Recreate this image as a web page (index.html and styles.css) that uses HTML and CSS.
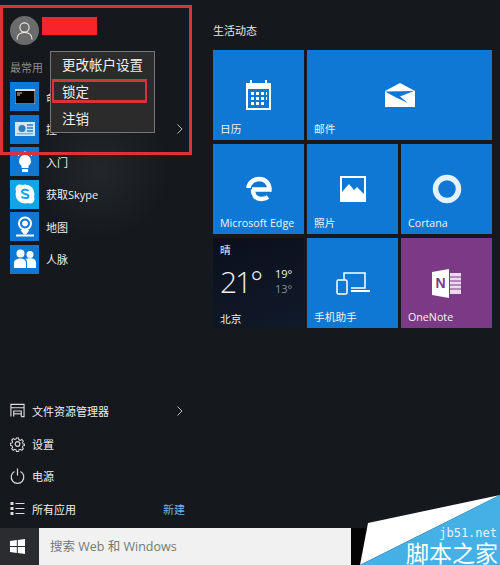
FILE: index.html
```html
<!DOCTYPE html>
<html lang="zh-CN">
<head>
  <meta charset="UTF-8">
  <title>开始菜单</title>
  <link rel="stylesheet" href="styles.css">
</head>
<body>
  <div class="start">
    <!-- Left column -->
    <div class="side">
      <div class="user">
        <div class="avatar">
          <svg width="17" height="18" viewBox="0 0 17 18" fill="none" stroke="#eee" stroke-width="1.100"><circle cx="8.500" cy="5.500" r="4.600"/><path d="M1 17.500c0-4.500 3-7 7.500-7s7.500 2.500 7.500 7"/></svg>
        </div>
        <div class="username"></div>
      </div>
      <div class="side-title">最常用</div>

      <div class="apps">
        <div class="app">
          <div class="app-icon blue">
            <svg width="20" height="15" viewBox="0 0 20 15"><rect width="20" height="15" fill="#d8d8d8"/><rect x="0.500" y="2" width="19" height="12.500" fill="#050505"/><path d="M2 4h5M2 6h3" stroke="#ccc"/></svg>
          </div>
          <span class="app-name">命</span>
        </div>
        <div class="app">
          <div class="app-icon blue">
            <svg width="20" height="15" viewBox="0 0 20 15"><rect width="20" height="14" fill="#cfe6f5"/><circle cx="7" cy="6.500" r="3.500" fill="#2a7fc0"/><path d="M12 3h6M12 6h6M12 9h6" stroke="#2a7fc0" stroke-width="1.500"/><rect x="2" y="11" width="16" height="1.500" fill="#7fb8df"/></svg>
          </div>
          <span class="app-name">控</span>
          <svg class="chevron" width="6" height="10" viewBox="0 0 6 10" fill="none" stroke="#bbb"><path d="M.5 .5L5 5 .5 9.500"/></svg>
        </div>
        <div class="app">
          <div class="app-icon blue">
            <svg width="18" height="22" viewBox="0 0 18 22" fill="#fff"><path d="M9 4a6 6 0 0 0-3.500 10.800V17h7v-2.200A6 6 0 0 0 9 4z"/><rect x="6" y="18" width="6" height="3"/><path d="M9 0v2.500M1 3l2 2M17 3l-2 2" stroke="#fff"/></svg>
          </div>
          <span class="app-name">入门</span>
        </div>
        <div class="app">
          <div class="app-icon skype">
            <svg width="22" height="22" viewBox="0 0 22 22"><circle cx="11" cy="11" r="9.500" fill="#fff"/><circle cx="6" cy="6" r="4.500" fill="#fff"/><circle cx="16" cy="16" r="4.500" fill="#fff"/><path d="M14.500 8c-1-1.500-6.500-2-6.500.8 0 2.800 6.500 1.400 6.500 4.400 0 2.600-5.500 2.400-7 .3" fill="none" stroke="#14a5e6" stroke-width="2"/></svg>
          </div>
          <span class="app-name">获取Skype</span>
        </div>
        <div class="app">
          <div class="app-icon blue">
            <svg width="20" height="22" viewBox="0 0 20 22" fill="none" stroke="#fff"><circle cx="10" cy="7.500" r="6" stroke-width="2"/><circle cx="10" cy="7.500" r="2.500" fill="#fff"/><path d="M6 14l3 4h2l3-4" fill="#fff"/><path d="M1 19.500h18" stroke-width="2"/></svg>
          </div>
          <span class="app-name">地图</span>
        </div>
        <div class="app">
          <div class="app-icon blue">
            <svg width="22" height="20" viewBox="0 0 22 20" fill="#fff"><circle cx="6.500" cy="4.500" r="4"/><circle cx="16" cy="5.500" r="3.500"/><path d="M0 19v-5c0-3 3-4.500 6.500-4.500s5.500 1.500 5.500 4.500v5zM13 19v-5.500c0-1.500-.5-3-1.500-3.700 1-.3 2.500-.6 4.500-.6 3.500 0 6 1.500 6 4.300v5.500z"/></svg>
          </div>
          <span class="app-name">人脉</span>
        </div>
      </div>

      <div class="links">
        <div class="link">
          <svg class="link-icon" width="16" height="15" viewBox="0 0 16 15" fill="none" stroke="#ddd" stroke-width="1.200"><path d="M1 14V1h14v13h-3M1 4.500h14M4 14V8h8v6"/><path d="M4 11h8"/></svg>
          <span>文件资源管理器</span>
          <svg class="chevron" width="6" height="10" viewBox="0 0 6 10" fill="none" stroke="#bbb"><path d="M.5 .5L5 5 .5 9.500"/></svg>
        </div>
        <div class="link">
          <svg class="link-icon" width="16" height="16" viewBox="0 0 16 16" fill="none" stroke="#ddd" stroke-width="1.200"><circle cx="8" cy="8" r="2.500"/><path d="M6.700 1h2.600l.4 2 1.600.7 1.800-1.100 1.800 1.800-1.100 1.800.7 1.600 2 .4v1.600l-2 .4-.7 1.600 1.100 1.800-1.800 1.800-1.800-1.100-1.600.7-.4 2H6.700l-.4-2-1.600-.7-1.800 1.100-1.800-1.800 1.100-1.800-.7-1.600-2-.4V7.200l2-.4.7-1.600-1.100-1.800 1.800-1.800 1.800 1.100 1.600-.7z" transform="translate(.8 .8) scale(.9)"/></svg>
          <span>设置</span>
        </div>
        <div class="link">
          <svg class="link-icon" width="15" height="16" viewBox="0 0 15 16" fill="none" stroke="#ddd" stroke-width="1.200"><path d="M4.500 3.500a6.300 6.300 0 1 0 6 0M7.500 0.500v7"/></svg>
          <span>电源</span>
        </div>
        <div class="link">
          <svg class="link-icon" width="14" height="14" viewBox="0 0 14 14" fill="#ddd"><rect width="3" height="3"/><rect y="5" width="3" height="3"/><rect y="10" width="3" height="3"/><rect x="5" y="1" width="9" height="1"/><rect x="5" y="6" width="9" height="1"/><rect x="5" y="11" width="9" height="1"/></svg>
          <span>所有应用</span>
          <span class="new">新建</span>
        </div>
      </div>
    </div>

    <!-- Tiles -->
    <div class="tiles-area">
      <div class="tiles-title">生活动态</div>
      <div class="tiles">
        <div class="tile">
          <svg class="tile-icon" width="25" height="30" viewBox="0 0 25 30" fill="#fff"><path d="M0 3h4V0h2v3h13V0h2v3h4v27H0zM2 9v19h21V9z"/><path d="M5 12h3v3H5zM10 12h3v3h-3zM15 12h3v3h-3zM5 17h3v3H5zM10 17h3v3h-3zM15 17h3v3h-3zM20 17h1v3h-1zM20 12h1v3h-1zM5 22h3v3H5zM10 22h3v3h-3zM15 22h3v3h-3z"/></svg>
          <span class="tile-name">日历</span>
        </div>
        <div class="tile wide">
          <svg class="tile-icon" width="30" height="24" viewBox="0 0 30 24"><path d="M0 8L15 0l15 8v16H0z" fill="#fff"/><path d="M0 8.500L29 8 15 13.500 23 20 11 14.500z" fill="#0f78d4"/></svg>
          <span class="tile-name">邮件</span>
        </div>
        <div class="tile">
          <svg class="tile-icon" width="26" height="26" viewBox="0 0 26 26" fill="none" stroke="#fff" stroke-width="4.500"><path d="M6 13.500h17.500C23.500 7 19 3 13 3 7 3 2.500 8 2.500 12"/><path d="M7 13.500c0 6 3 9.500 8 9.500 3 0 5-.5 7-2"/></svg>
          <span class="tile-name">Microsoft Edge</span>
        </div>
        <div class="tile">
          <svg class="tile-icon" width="26" height="26" viewBox="0 0 26 26" fill="#fff"><path d="M0 0h26v26H0zM2 2v14l7-8 5 6 3-3 7 7V2z" fill-rule="evenodd"/></svg>
          <span class="tile-name">照片</span>
        </div>
        <div class="tile">
          <svg class="tile-icon" width="30" height="30" viewBox="0 0 30 30" fill="none"><circle cx="15" cy="15" r="11.500" stroke="#e4f2fb" stroke-width="5.500"/></svg>
          <span class="tile-name">Cortana</span>
        </div>
        <div class="tile weather">
          <div class="weather-sky">晴</div>
          <div class="weather-temps">
            <div class="weather-now">21°</div>
            <div class="weather-range">
              <div>19°</div>
              <div class="weather-low">13°</div>
            </div>
          </div>
          <div class="weather-city">北京</div>
        </div>
        <div class="tile">
          <svg class="tile-icon" width="34" height="23" viewBox="0 0 34 23" fill="none" stroke="#fff" stroke-width="1.500"><path d="M8 8V1h21v15H15"/><path d="M15 18h19v2H15z" fill="#fff" stroke="none"/><rect x="1" y="8" width="10" height="14" rx="1.500"/></svg>
          <span class="tile-name">手机助手</span>
        </div>
        <div class="tile purple">
          <svg class="tile-icon" width="29" height="29" viewBox="0 0 29 29" fill="#fff"><path d="M0 3l17-3v29L0 26z"/><path d="M18 4h11v21H18z" fill="#e9dce9"/><path d="M18 8h11M18 12h11M18 16h11M18 20h11" stroke="#7b3a85"/><text x="3.500" y="19" font-size="14" font-weight="700" fill="#7b3a85" font-family="Liberation Sans">N</text></svg>
          <span class="tile-name">OneNote</span>
        </div>
      </div>
    </div>
  </div>

  <!-- Taskbar -->
  <div class="taskbar">
    <div class="start-btn">
      <svg width="15" height="15" viewBox="0 0 15 15" fill="#fff"><path d="M0 2l6.800-1v6H0zM7.800 1L15 0v7H7.800zM0 8h6.800v6L0 13zM7.800 8H15v7l-7.200-1z"/></svg>
    </div>
    <div class="search">搜索 Web 和 Windows</div>
  </div>

  <!-- Red annotations drawn over the screenshot -->
  <div class="mark-box"></div>
  <div class="popup">
    <div class="popup-item">更改帐户设置</div>
    <div class="popup-item">锁定</div>
    <div class="popup-item">注销</div>
  </div>
  <div class="mark-item"></div>

  <!-- Watermark -->
  <svg class="wm-shape" width="140" height="70" viewBox="0 0 140 70"><path d="M8 28L140 0 0 70z" fill="#fff"/><path d="M140 0v70H0z" fill="#45b0e6"/></svg>
  <div class="wm-url">jb51.net</div>
  <div class="wm-name">脚本之家</div>
</body>
</html>
```

FILE: styles.css
```css
/* Base */
body {
  margin: 0;
  width: 500px;
  height: 565px;
  overflow: hidden;
  position: relative;
  display: flex;
  flex-direction: column;
  background: radial-gradient(circle at 100px 170px, #23262a 0, #15181d 70px);
  color: #eee;
  font-family: "Open Sans", "Noto Sans CJK SC", sans-serif;
  font-size: 11px;
}

.start {
  flex: 1;
  display: flex;
}

/* Left column */
.side {
  width: 200px;
  padding: 16px 0 3px 10px;
  box-sizing: border-box;
  display: flex;
  flex-direction: column;
}

.user {
  display: flex;
  gap: 3px;
}

.avatar {
  width: 29px;
  height: 29px;
  border-radius: 50%;
  background-color: #6b6b6b;
  display: flex;
  align-items: center;
  justify-content: center;
}

.username {
  width: 55px;
  height: 18px;
  margin-top: 1px;
  background-color: #f4252b;
}

.side-title {
  height: 37px;
  line-height: 46px;
  font-size: 11px;
  color: #8c8c8c;
}

.apps {
  display: flex;
  flex-direction: column;
  gap: 3.6px;
}

.app {
  height: 29px;
  display: flex;
  align-items: center;
  gap: 7px;
  padding-right: 15px;
}

.app-icon {
  width: 29px;
  height: 29px;
  flex: none;
  display: flex;
  align-items: center;
  justify-content: center;
}

.blue {
  background-color: #0f78d4;
}

.skype {
  background-color: #14a5e6;
}

.chevron {
  margin-left: auto;
  margin-right: 2px;
}

.links {
  margin-top: auto;
  padding-right: 15px;
}

.link {
  height: 32.6px;
  display: flex;
  align-items: center;
  gap: 7px;
}

.link-icon {
  flex: none;
  width: 15px;
}

.new {
  margin-left: auto;
  color: #6fb3e8;
}

/* Tiles */
.tiles-area {
  padding: 22px 0 0 13px;
}

.tiles-title {
  height: 28px;
  font-size: 11px;
  line-height: 17px;
  color: #e6e6e6;
}

.tiles {
  display: grid;
  grid-template-columns: repeat(3, 91px);
  grid-auto-rows: 90px;
  gap: 4px 3px;
}

.tile {
  position: relative;
  display: flex;
  align-items: center;
  justify-content: center;
  background-color: #0f78d4;
}

.wide {
  grid-column: span 2;
}

.purple {
  background-color: #7c3a86;
}

/* label sits in the tile corner, over the tile background */
.tile-name {
  position: absolute;
  left: 7px;
  bottom: 3px;
  font-size: 10.700px;
  line-height: 16px;
  color: #f2f2f2;
}

.weather {
  display: block;
  padding: 4px 7px 0;
  background: linear-gradient(160deg, #0c0f1c, #101a2a);
}

.weather-sky,
.weather-city {
  font-size: 10.700px;
  line-height: 16px;
}

.weather-temps {
  display: flex;
  gap: 18px;
  height: 46px;
  margin-top: 4px;
}

.weather-now {
  width: 37px;
  font-weight: 300;
  font-size: 30px;
  line-height: 40px;
  letter-spacing: -2px;
}

.weather-range {
  font-size: 11px;
  line-height: 15px;
  padding-top: 4px;
}

.weather-low {
  color: #8a8f98;
}

.weather-city {
  margin-top: 3px;
}

/* Taskbar */
.taskbar {
  height: 37px;
  flex: none;
  display: flex;
  background-color: #050505;
}

.start-btn {
  width: 39px;
  padding-left: 10px;
  box-sizing: border-box;
  display: flex;
  align-items: center;
  background-color: #2a2c2f;
}

.search {
  width: 312px;
  padding-left: 11px;
  box-sizing: border-box;
  line-height: 37px;
  font-size: 12.500px;
  color: #777;
  background-color: #f1f1f1;
}

/* Overlays */
.mark-box {
  position: absolute;
  left: 0;
  top: 5px;
  width: 186px;
  height: 144px;
  border: 3px solid #dc3338;
}

.popup {
  position: absolute;
  left: 50px;
  top: 51px;
  width: 105px;
  height: 82px;
  box-sizing: border-box;
  padding-top: 1px;
  border: 1px solid #777;
  background-color: #2b2b2b;
}

.popup-item {
  height: 27px;
  line-height: 25px;
  padding-left: 11px;
  font-size: 13.500px;
  color: #f0f0f0;
}

.mark-item {
  position: absolute;
  left: 52px;
  top: 79px;
  width: 91px;
  height: 18px;
  border: 2px solid #d5353a;
  border-width: 3px 2px;
}

.wm-shape {
  position: absolute;
  right: 0;
  bottom: 0;
}

.wm-url {
  position: absolute;
  right: 3px;
  bottom: 25px;
  font-family: "DejaVu Sans Mono", monospace;
  font-size: 12px;
  line-height: 14px;
  color: #e8f4fb;
}

.wm-name {
  position: absolute;
  right: 2px;
  bottom: 1px;
  font-family: "Noto Sans CJK SC", sans-serif;
  font-size: 23px;
  line-height: 23px;
  color: #fff;
}
```
